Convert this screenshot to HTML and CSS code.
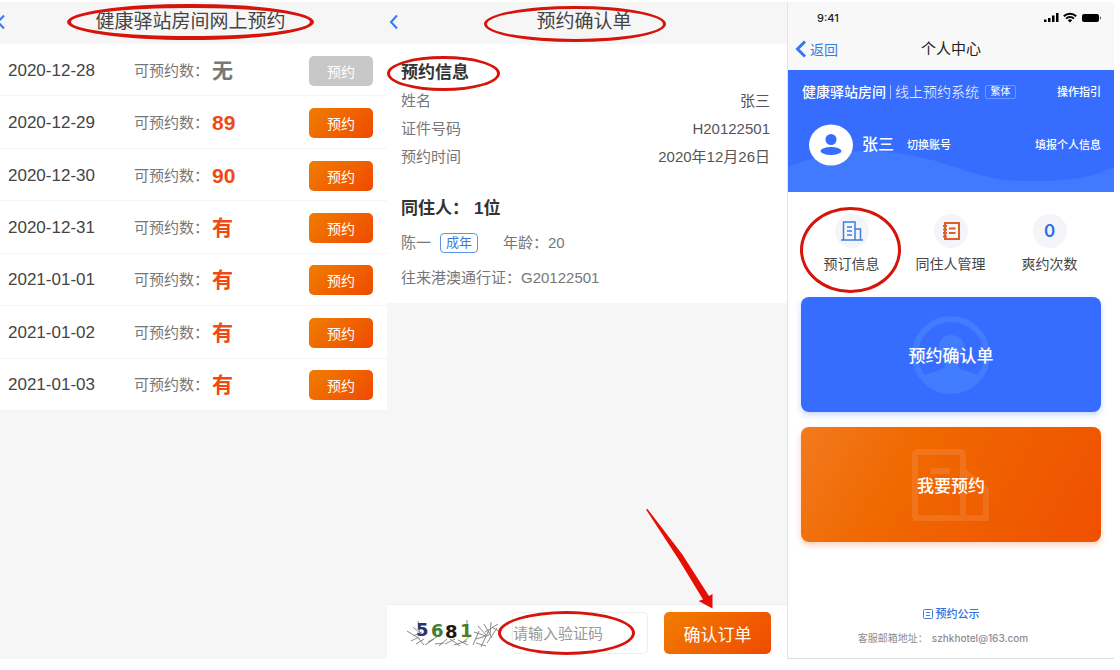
FILE: index.html
```html
<!DOCTYPE html>
<html lang="zh-CN">
<head>
  <meta charset="UTF-8" />
  <meta name="viewport" content="width=device-width, initial-scale=1.0" />
  <title>健康驿站房间网上预约</title>
  <link rel="stylesheet" href="styles.css">
</head>
<body>
  <div class="steps">

    <!-- 可预约日期 -->
    <section class="panel dates">
      <header class="topbar">
        <button class="back" aria-label="返回">
          <svg width="10" height="16" viewBox="0 0 10 16"><path d="M8 1.500 2 8l6 6.500" /></svg>
        </button>
        <h1><span class="marked">健康驿站房间网上预约<i class="mark mark-title"></i></span></h1>
      </header>
      <ul class="date-list">
        <li class="full"><time>2020-12-28</time><span class="label">可预约数：</span><b>无</b><button class="btn" disabled>预约</button></li>
        <li><time>2020-12-29</time><span class="label">可预约数：</span><b>89</b><button class="btn">预约</button></li>
        <li><time>2020-12-30</time><span class="label">可预约数：</span><b>90</b><button class="btn">预约</button></li>
        <li><time>2020-12-31</time><span class="label">可预约数：</span><b>有</b><button class="btn">预约</button></li>
        <li><time>2021-01-01</time><span class="label">可预约数：</span><b>有</b><button class="btn">预约</button></li>
        <li><time>2021-01-02</time><span class="label">可预约数：</span><b>有</b><button class="btn">预约</button></li>
        <li><time>2021-01-03</time><span class="label">可预约数：</span><b>有</b><button class="btn">预约</button></li>
      </ul>
    </section>

    <!-- 预约确认单 -->
    <section class="panel confirm">
      <header class="topbar">
        <button class="back" aria-label="返回">
          <svg width="10" height="16" viewBox="0 0 10 16"><path d="M8 1.500 2 8l6 6.500" /></svg>
        </button>
        <h1><span class="marked">预约确认单<i class="mark mark-title"></i></span></h1>
      </header>
      <div class="sheet">
        <h2><span class="marked">预约信息<i class="mark mark-info"></i></span></h2>
        <dl>
          <div><dt>姓名</dt><dd>张三</dd></div>
          <div><dt>证件号码</dt><dd>H20122501</dd></div>
          <div><dt>预约时间</dt><dd>2020年12月26日</dd></div>
        </dl>
        <h2 class="guests">同住人：<span>1位</span></h2>
        <p class="guest">陈一<span class="tag">成年</span><span>年龄：20</span></p>
        <p class="guest">往来港澳通行证：G20122501</p>
      </div>
      <form class="submit" onsubmit="return false">
        <svg class="captcha" width="92" height="34" viewBox="0 0 92 34" role="img" aria-label="验证码">
          <path d="M-1 15l13 8M5 11l8 7M10 5l2 14M5 20l9-4M3 25l8-4M8 28l8-5M17 29l9-6M11 23l5 6M20 26l12-7M27 28l9-1M31 30l8-7M37 28l10-5M42 23l10 7M46 29l13-4M50 24l10 5M54 27l8-7M59 4v16M66 16l12 4M65 29l6-14M70 10l9 10M68 23l13-4M73 31l8-17M76 8l8 14M77 16l13-8M79 27l10-15M83 6l-1 13M84 11l8 5M68 27l10 3" />
          <text x="8" y="20" fill="#2b3566">5</text>
          <text x="23" y="21" fill="#3f7d35">6</text>
          <text x="37" y="22" fill="#1d1712">8</text>
          <text x="52" y="21" fill="#4f7d1c">1</text>
        </svg>
        <div class="field">
          <input type="text" placeholder="请输入验证码" aria-label="请输入验证码" />
          <i class="mark mark-field"></i>
        </div>
        <div class="action">
          <button class="btn btn-big" type="submit">确认订单</button>
          <svg class="arrow" width="68" height="100" viewBox="0 0 68 100"><path d="M0 .5 1.500 0 36 45 63 87 66.500 85 66.500 99.500 52.500 92 57 90.500 33 51Z" /></svg>
        </div>
      </form>
    </section>

    <!-- 个人中心 -->
    <section class="panel center">
      <header class="phone-head">
        <div class="status">
          <span>9:41</span>
          <svg width="58" height="12" viewBox="0 0 58 12">
            <path d="M1 7.500h2.500V10H1zM5 6h2.500v4H5zM9 3.500h2.500V10H9zM13 1h2.500v9H13z" />
            <path d="M27 10.500l-2.200-2.200a3.200 3.200 0 0 1 4.400 0z" />
            <path class="wave" d="M20.800 4.200a9 9 0 0 1 12.400 0M23 6.600a5.800 5.800 0 0 1 8 0" />
            <rect x="39" y="2" width="17" height="8" rx="2" />
            <path d="M57 4.500c1 .5 1 2.500 0 3z" />
          </svg>
        </div>
        <nav class="phone-nav">
          <button class="return">
            <svg width="12" height="18" viewBox="0 0 12 18"><path d="M10 1.500 2.500 9l7.500 7.500" /></svg>
            返回
          </button>
          <h1>个人中心</h1>
        </nav>
      </header>
      <div class="banner">
        <svg class="hills" viewBox="0 0 327 42" preserveAspectRatio="none" aria-hidden="true"><path d="M0 17C45-2 90-4 145 10C205 30 215 32 260 31C290 30 310 25 327 17V42H0Z" /></svg>
        <div class="brand">
          <strong>健康驿站房间</strong><span class="system">线上预约系统</span>
          <button class="lang">繁体</button>
          <a class="push" href="#">操作指引</a>
        </div>
        <div class="user">
          <svg width="44" height="42" viewBox="0 0 44 42"><ellipse cx="22" cy="21" rx="22" ry="20.500" fill="#fff" /><g fill="#366dff"><circle cx="22" cy="15.500" r="5.500" /><ellipse cx="22" cy="27" rx="10.500" ry="4" /></g></svg>
          <strong>张三</strong>
          <a href="#">切换账号</a>
          <a class="push" href="#">填报个人信息</a>
        </div>
      </div>
      <div class="shortcuts">
        <a class="marked" href="#">
          <span class="round">
            <svg class="blue" width="24" height="22" viewBox="0 0 24 22"><path d="M1 20h22M3.500 20V2h11.500v18M15 9h5.500v11M7 7h5M7 11h5M7 15h5" /></svg>
          </span>
          预订信息
          <i class="mark mark-order"></i>
        </a>
        <a href="#">
          <span class="round">
            <svg class="red" width="20" height="20" viewBox="0 0 20 20"><path d="M4 2h14v16H4zM8 7.500h6.500M8 12h6.500M2 5h4M2 8.500h4M2 12h4M2 15.500h4" /></svg>
          </span>
          同住人管理
        </a>
        <a href="#"><span class="round">0</span>爽约次数</a>
      </div>
      <div class="cards">
        <button class="card card-blue">
          <svg width="80" height="80" viewBox="0 0 80 80"><circle cx="40" cy="40" r="36" fill="none" stroke="#427cff" stroke-width="6" /><path d="M28 32c0-8 5-12 12-12s13 4 13 12c0 7-3 11-6 14v5c2 5 17 6 22 11A37 37 0 0 1 12 62c5-5 20-6 22-11v-5c-3-3-6-7-6-14z" fill="#427cff" /></svg>
          <span>预约确认单</span>
        </button>
        <button class="card card-orange">
          <svg width="80" height="74" viewBox="0 0 80 74"><path d="M4 70V7q0-3 3-3h42q3 0 3 3v63M54 24 75 42v28H2M19 23h20" fill="none" stroke="#fff" stroke-opacity=".1" stroke-width="6" /></svg>
          <span>我要预约</span>
        </button>
      </div>
      <footer class="foot">
        <a href="#"><svg width="10" height="10" viewBox="0 0 10 10"><path d="M1.500.5h7q1 0 1 1v7q0 1-1 1h-7q-1 0-1-1v-7q0-1 1-1zM3 3.500h4M3 6.500h4" /></svg>预约公示</a>
        <p>客服邮箱地址：<span>szhkhotel@163.com</span></p>
      </footer>
    </section>

  </div>
</body>
</html>
```
FILE: styles.css
```css
:root {
  --blue: #366dff;
  --link: #3b7de0;
  --orange-start: #f07d00;
  --orange-end: #ef4a00;
  --grey-bg: #f6f6f6;
  --mark: #d5140c;
}
* {
  box-sizing: border-box;
}
body {
  margin: 0;
  background: #fff;
  color: #444;
  font-family: "Liberation Sans", "Noto Sans CJK SC", sans-serif;
  font-size: 15px;
  line-height: 20px;
}
h1, h2, p, ul, dl, dd {
  margin: 0;
  padding: 0;
}
a {
  color: inherit;
  text-decoration: none;
}
button {
  padding: 0;
  border: none;
  background: none;
  color: inherit;
  font-family: inherit;
  cursor: pointer;
}
svg {
  display: block;
  flex: none;
}
.steps {
  display: grid;
  grid-template-columns: 387fr 400fr 327fr;
  min-height: 100vh;
  padding: 2px 6px 11px 0;
}
.panel {
  display: flex;
  flex-direction: column;
  min-width: 0;
  background: var(--grey-bg);
}

/* 红圈标注 */
.marked {
  position: relative;
}
.mark {
  position: absolute;
  border: 3px solid var(--mark);
  border-radius: 50%;
  pointer-events: none;
}
.mark-title {
  inset: -6px -28px;
  border-width: 4px;
}
.confirm .mark-title {
  inset: -4px -34px -8px -52px;
  border-width: 3px;
}
.mark-info {
  inset: -7px -31px -8px -14px;
}
.mark-field {
  inset: -1px 13px -1px -14px;
}
.mark-order {
  inset: -7px 0 -19px -2px;
}

.topbar {
  display: grid;
  grid-template-columns: 32px 1fr 38px;
  align-items: center;
  height: 42px;
  padding-bottom: 2px;
}
.topbar h1 {
  color: #444;
  font-size: 19px;
  font-weight: 400;
  line-height: 24px;
  text-align: center;
}
.topbar .marked {
  display: inline-block;
}
.back svg {
  margin-left: 2px;
}
.dates .back svg {
  margin-left: -4px;
}
.back path, .return path {
  fill: none;
  stroke: #3478f0;
  stroke-width: 2;
}

.date-list {
  display: grid;
  grid-auto-rows: 1fr;
  height: 367px;
  background: #fff;
  list-style: none;
}
.date-list li {
  display: flex;
  align-items: center;
  padding: 2px 14px 0 8px;
  border-bottom: 1px solid #f4f4f4;
}
.date-list time {
  width: 126px;
  font-size: 17px;
}
.date-list .label {
  width: 78px;
  color: #777;
}
.date-list b {
  color: #f04a14;
  font-size: 21px;
}
.date-list .full b {
  color: #777;
}
.btn {
  width: 64px;
  height: 30px;
  margin-left: auto;
  border-radius: 5px;
  background: linear-gradient(135deg, var(--orange-start), var(--orange-end));
  color: #fff;
  font-size: 14px;
}
.btn:disabled {
  background: #c8c8c8;
}

.sheet {
  padding: 19px 17px 15px 14px;
  background: #fff;
}
.sheet h2 {
  color: #333;
  font-size: 17px;
  line-height: 20px;
}
.sheet h2 .marked {
  display: inline-block;
}
.sheet dl {
  margin-top: 4px;
}
.sheet dl div {
  display: flex;
  justify-content: space-between;
  line-height: 28px;
}
.sheet dt, .guest {
  color: #777;
}
.sheet dd {
  color: #555;
}
.sheet h2.guests {
  margin: 28px 0 14px;
}
.guests span {
  margin-left: 5px;
}
.guest {
  display: flex;
  align-items: center;
  margin-bottom: 15px;
}
.guest:last-child {
  margin-bottom: 0;
}
.tag {
  margin: 0 25px 0 9px;
  padding: 0 5px;
  border: 1px solid #5c94e8;
  border-radius: 4px;
  color: #3f78d8;
  font-size: 13px;
  line-height: 18px;
}
.submit {
  display: flex;
  align-items: center;
  height: 55px;
  margin-top: auto;
  padding: 2px 16px 0 21px;
  border-top: 1px solid #eee;
  background: #fff;
}
.captcha {
  overflow: visible;
  font-family: "DejaVu Sans", sans-serif;
  font-size: 18px;
  font-weight: 700;
}
.captcha path {
  fill: none;
  stroke: #8a8a8a;
}
.field {
  position: relative;
  flex: 1;
  margin: 0 16px 0 12px;
}
.field input {
  width: 100%;
  height: 42px;
  padding: 0;
  border: 1px solid #eee;
  border-radius: 5px;
  font-family: inherit;
  font-size: 15px;
}
.field input::placeholder {
  color: #999;
}
.action {
  position: relative;
}
.btn-big {
  display: block;
  width: 107px;
  height: 42px;
  font-size: 17px;
}
.arrow {
  position: absolute;
  right: 57px;
  bottom: 45px;
  fill: #e60f05;
}

.center {
  border-left: 1px solid #e4e4e4;
  border-bottom: 1px solid #ddd;
  background: #fff;
}
.phone-head {
  height: 68px;
  background: #f8f8f8;
}
.status {
  display: flex;
  align-items: center;
  justify-content: space-between;
  height: 32px;
  padding: 0 13px 0 29px;
  color: #222;
  font-family: Inter, sans-serif;
  font-size: 11px;
  font-weight: 500;
}
.status .wave {
  fill: none;
  stroke: #000;
  stroke-width: 2;
}
.phone-nav {
  display: grid;
  grid-template-columns: 60px 1fr 60px;
  align-items: center;
  height: 30px;
}
.phone-nav h1 {
  color: #222;
  font-size: 15px;
  font-weight: 400;
  text-align: center;
}
.return {
  display: flex;
  align-items: center;
  gap: 3px;
  padding-left: 7px;
  color: var(--link);
  font-size: 14px;
}
.return path {
  stroke-width: 3;
}
.banner {
  position: relative;
  height: 122px;
  padding: 12px 13px 0 14px;
  background: var(--blue);
  color: #fff;
  font-size: 11px;
}
.hills {
  position: absolute;
  left: 0;
  bottom: 0;
  width: 100%;
  height: 42px;
  fill: #417aff;
}
.brand, .user {
  position: relative;
  display: flex;
  align-items: center;
}
.brand strong, .system {
  font-size: 14px;
  font-weight: 500;
}
.brand .system {
  margin: 0 6px 0 4px;
  padding-left: 4px;
  border-left: 1px solid #a9c2ff;
  font-weight: 300;
  line-height: 14px;
}
.lang {
  width: 31px;
  border: 1px solid #6d97ff;
  border-radius: 2px;
  font-size: 10px;
  line-height: 12px;
}
.push {
  margin-left: auto;
}
.banner a {
  font-weight: 500;
}
.user {
  margin-top: 22px;
  padding-left: 7px;
}
.user strong {
  margin: 0 13px 0 9px;
  font-size: 16px;
  font-weight: 500;
}
.shortcuts {
  display: grid;
  grid-template-columns: repeat(3, 1fr);
  padding: 22px 15px 0 14px;
  font-size: 14px;
}
.shortcuts a {
  display: flex;
  flex-direction: column;
  align-items: center;
  gap: 6px;
  color: #444;
}
.round {
  display: grid;
  place-items: center;
  width: 34px;
  height: 34px;
  border-radius: 50%;
  background: #f4f5f9;
  color: #2f70e0;
  font-family: Inter, sans-serif;
  font-size: 17px;
  font-weight: 600;
}
.round path {
  fill: none;
  stroke: #3d80dc;
  stroke-width: 2;
}
.round .blue path {
  stroke-width: 1.5;
}
.round .red path {
  stroke: #d9602c;
}
.cards {
  display: grid;
  gap: 15px;
  padding: 23px 13px 0;
}
.card {
  display: grid;
  place-items: center;
  height: 115px;
  border-radius: 8px;
  color: #fff;
  font-size: 17px;
  font-weight: 500;
}
.card svg, .card span {
  grid-area: 1 / 1;
}
.card span {
  z-index: 1;
}
.card-blue {
  background: var(--blue);
  box-shadow: 0 3px 6px #366dff44;
}
.card-orange {
  background: linear-gradient(120deg, #f27a1e, #f06800 35%, #ef5000);
  box-shadow: 0 3px 6px #f0500044;
}
.foot {
  margin-top: auto;
  padding-bottom: 9px;
  text-align: center;
}
.foot a {
  display: flex;
  align-items: center;
  justify-content: center;
  gap: 3px;
  color: #2f70e0;
  font-size: 11px;
  font-weight: 500;
}
.foot p {
  margin: 4px 16px 0 0;
  color: #8a8d96;
  font-size: 10px;
}
.foot path {
  fill: none;
  stroke: #3d80dc;
}
.foot p span {
  margin-left: 4px;
  font-family: Inter, sans-serif;
  font-weight: 500;
}
```
